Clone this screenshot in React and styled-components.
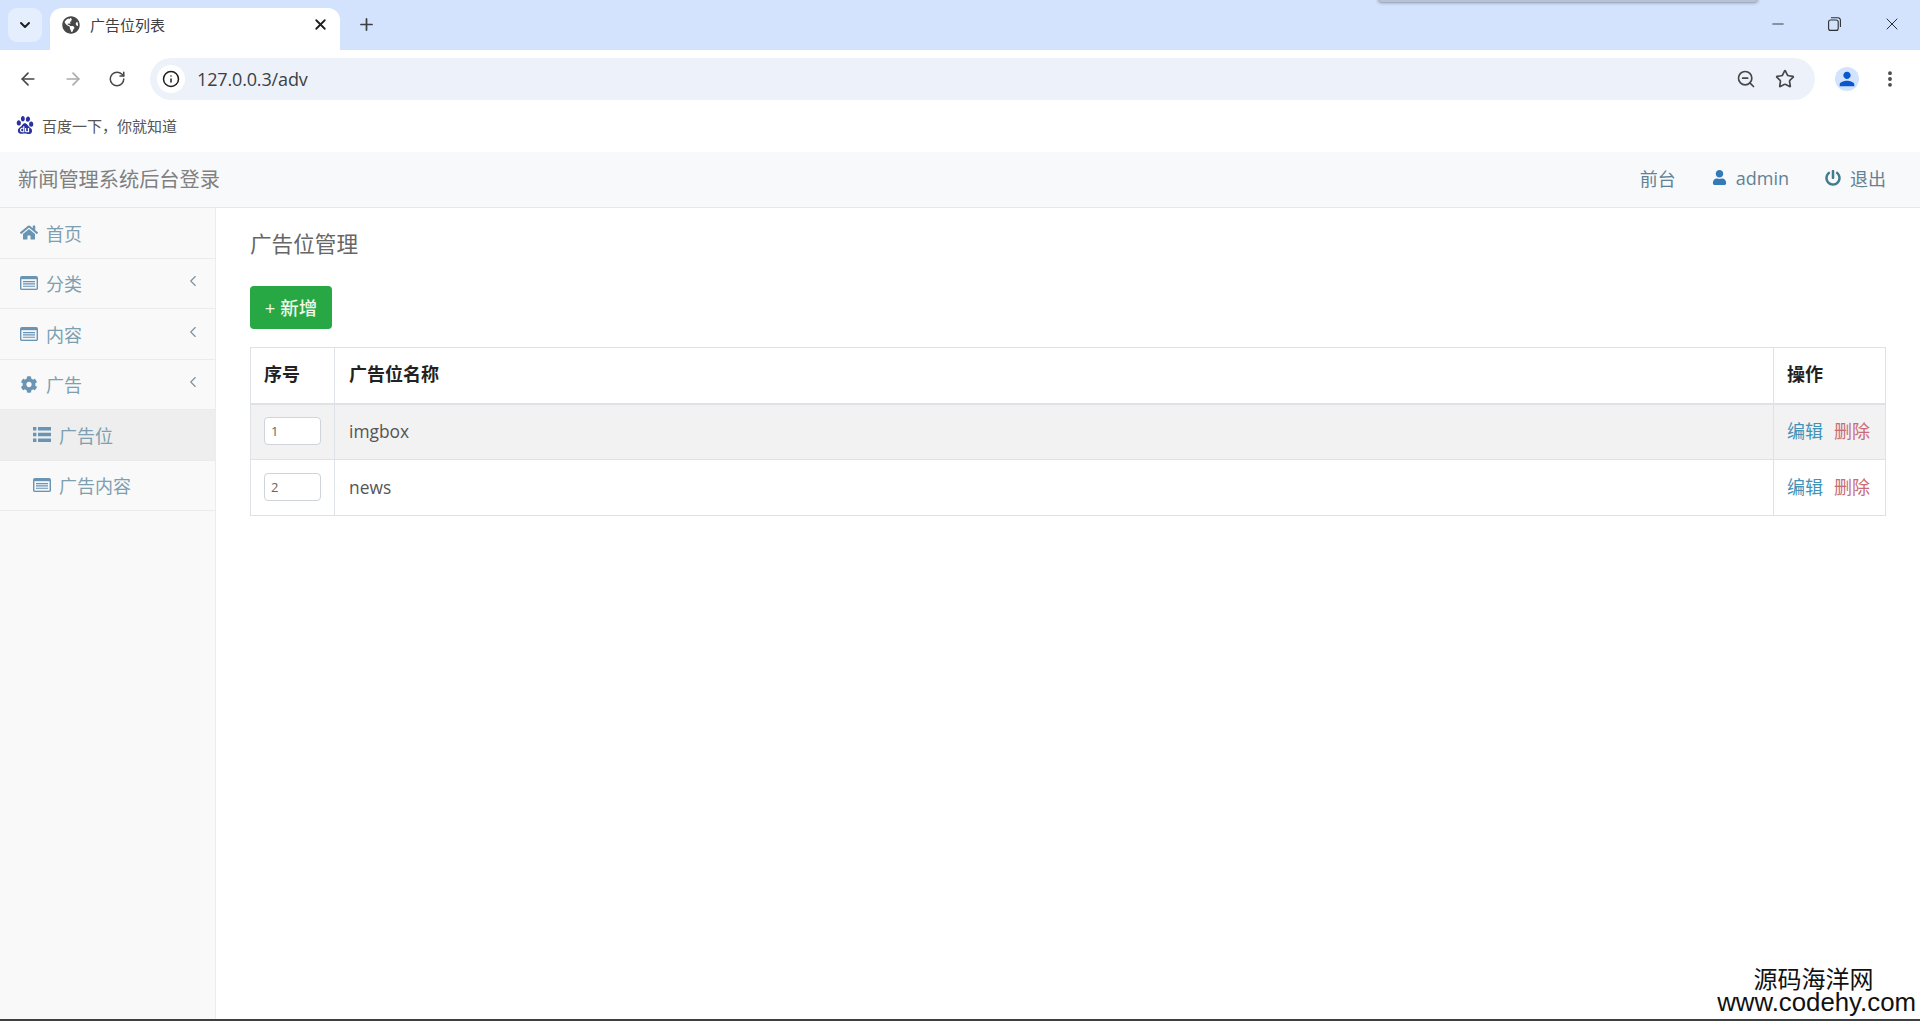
import React from 'react';
import styled, { createGlobalStyle } from 'styled-components';
import { ArrowLeft, ArrowRight, RotateCw, Info, Star, ZoomOut, EllipsisVertical, X, Plus, ChevronDown, Minus, ChevronLeft } from 'lucide-react';
import { FaHome, FaCog, FaUser, FaPowerOff, FaGlobeAmericas } from 'react-icons/fa';
import { MdPerson } from 'react-icons/md';
import { SiBaidu } from 'react-icons/si';

const cjk = `"Open Sans", "Noto Sans CJK SC", sans-serif`;

const GlobalStyle = createGlobalStyle`
  html, body { margin: 0; padding: 0; height: 100%; background: #fff; }
  * { box-sizing: border-box; }
  body { font-family: ${cjk}; overflow: hidden; }
`;

const Page = styled.div`
  position: relative;
  height: 1021px;
  display: flex;
  flex-direction: column;
  border-bottom: 2px solid #3c4043;
`;

const TabStrip = styled.div`
  position: relative;
  height: 50px;
  flex: none;
  background: #d3e3fd;
  display: flex;
  align-items: flex-end;
  padding-left: 8px;
`;

const TabSearch = styled.div`
  width: 34px;
  height: 34px;
  margin-bottom: 8px;
  border-radius: 9px;
  background: #e5eefc;
  color: #1f1f1f;
  display: flex;
  align-items: center;
  justify-content: center;
`;

const Tab = styled.div`
  width: 290px;
  height: 42px;
  margin-left: 8px;
  padding: 0 11px 9px 12px;
  background: #fff;
  border-radius: 12px 12px 0 0;
  display: flex;
  align-items: center;
  font-size: 15px;
  color: #3c4043;
`;

const TabTitle = styled.span`
  flex: 1;
  margin-left: 10px;
`;

const NewTab = styled.div`
  width: 52px;
  height: 42px;
  padding-bottom: 9px;
  display: flex;
  align-items: center;
  justify-content: center;
  color: #3c4043;
`;

const WindowControls = styled.div`
  margin-left: auto;
  height: 50px;
  display: flex;
  align-items: center;
  padding-bottom: 2px;
  padding-right: 18px;
  gap: 41px;
  color: #2b2f33;
`;

const ShadowPeek = styled.div`
  position: absolute;
  top: -6px;
  left: 1378px;
  width: 380px;
  height: 8px;
  background: #b7c3d2;
  border-radius: 6px;
  box-shadow: 0 1px 3px rgba(60, 70, 90, 0.5);
`;

const Toolbar = styled.div`
  height: 50px;
  flex: none;
  padding-top: 8px;
  display: flex;
  align-items: flex-start;
  background: #fff;
  color: #474747;
`;

const NavButtons = styled.div`
  width: 150px;
  height: 42px;
  padding-left: 18px;
  display: flex;
  align-items: center;
  gap: 25px;
`;

const NavButton = styled.span`
  display: flex;
  color: ${(p) => (p.$disabled ? '#a8abad' : '#474747')};
`;

const AddressBar = styled.div`
  width: 1665px;
  height: 42px;
  padding: 0 20px 0 7px;
  border-radius: 21px;
  background: #edf2fa;
  display: flex;
  align-items: center;
`;

const InfoChip = styled.span`
  width: 28px;
  height: 28px;
  border-radius: 50%;
  background: #fff;
  display: flex;
  align-items: center;
  justify-content: center;
  color: #1f1f1f;
`;

const Url = styled.span`
  margin-left: 12px;
  flex: 1;
  font-size: 18px;
  letter-spacing: -0.15px;
  color: #3c4043;
`;

const AddressIcons = styled.div`
  display: flex;
  align-items: center;
  gap: 19px;
`;

const Avatar = styled.span`
  width: 24px;
  height: 24px;
  margin-left: 20px;
  border-radius: 50%;
  background: #d3e3fd;
  color: #0b57d0;
  display: flex;
  align-items: center;
  justify-content: center;
  align-self: center;
`;

const Dots = styled.span`
  margin-left: 21px;
  display: flex;
  align-self: center;
  color: #474747;
`;

const BookmarkBar = styled.div`
  height: 52px;
  flex: none;
  padding: 0 0 2px 16px;
  display: flex;
  align-items: center;
  background: #fff;
`;

const BookmarkText = styled.span`
  margin-left: 8px;
  font-size: 15px;
  color: #555;
`;

const TopNav = styled.header`
  height: 56px;
  flex: none;
  padding: 0 34px 4px 18px;
  display: flex;
  align-items: center;
  background: #f8f9fa;
  border-bottom: 1px solid #e7e7e7;
`;

const Brand = styled.span`
  font-size: 20.2px;
  color: #808080;
  margin-right: auto;
  position: relative;
  top: 1px;
`;

const TopLink = styled.a`
  display: flex;
  align-items: center;
  margin-left: ${(p) => p.$gap}px;
  font-size: 18px;
  color: #5f8296;
  svg { color: ${(p) => p.$iconColor || '#337ab7'}; margin-right: 9px; }
`;

const Body = styled.div`
  flex: 1;
  display: flex;
  min-height: 0;
`;

const Sidebar = styled.nav`
  width: 216px;
  flex: none;
  background: #f9f9f9;
  border-right: 1px solid #ececec;
`;

const SideItem = styled.a`
  height: 50.5px;
  padding: 0 13px 0 ${(p) => (p.$sub ? 33 : 20)}px;
  display: flex;
  align-items: center;
  font-size: 18px;
  color: #7d9fb0;
  border-bottom: 1px solid #ebebeb;
  background: ${(p) => (p.$active ? '#eeeeee' : 'transparent')};
  .lead { color: #6a94b4; width: 18px; height: 17px; margin-right: 8px; flex: none; }
  .lead.alt { height: 14px; }
  .lead.bars { height: 15px; }
`;

const Caret = styled.span`
  margin-left: auto;
  display: flex;
  color: #7d8f9c;
  position: relative;
  top: -2px;
`;

const Main = styled.main`
  flex: 1;
  padding: 19px 34px 0 34px;
  background: #fff;
`;

const Title = styled.h1`
  margin: 0 0 26px;
  font-size: 21.6px;
  line-height: 33px;
  font-weight: 400;
  color: #666;
`;

const AddButton = styled.button`
  display: block;
  width: 82px;
  height: 43px;
  padding: 0 0 2px;
  margin-bottom: 18px;
  border: none;
  border-radius: 4px;
  background: #28a745;
  color: #eefbe9;
  font-family: ${cjk};
  font-size: 18.5px;
  font-weight: 500;
`;

const Table = styled.table`
  width: 1636px;
  border-collapse: collapse;
  table-layout: fixed;
  border: 1px solid #dee2e6;
`;

const Th = styled.th`
  width: ${(p) => (p.$w ? `${p.$w}px` : 'auto')};
  height: 56px;
  padding: 0 13px 4px;
  text-align: left;
  font-size: 18px;
  font-weight: 700;
  color: #222;
  border-left: 1px solid #dee2e6;
  border-bottom: 2px solid #dee2e6;
  &:nth-child(2) { padding-left: 14px; }
`;

const Row = styled.tr`
  background: ${(p) => (p.$shade ? '#f2f2f2' : '#fff')};
`;

const Td = styled.td`
  height: 56px;
  padding: 0 13px 2px;
  font-size: 17.4px;
  white-space: nowrap;
  color: #555;
  border-left: 1px solid #dee2e6;
  border-bottom: 1px solid #dee2e6;
  &:nth-child(2) { padding-left: 14px; }
`;

const SortInput = styled.input`
  display: block;
  width: 57px;
  height: 28px;
  padding: 0 6px;
  border: 1px solid #ced4da;
  border-radius: 4px;
  background: #fff;
  font-family: ${cjk};
  font-size: 13px;
  color: #666;
`;

const ActionLink = styled.a`
  position: relative;
  top: -1px;
  font-size: 18px;
  margin-right: 11px;
  color: ${(p) => (p.$danger ? '#c96a78' : '#3f93b8')};
`;

const Watermark = styled.div`
  position: absolute;
  right: 4px;
  bottom: 4px;
  text-align: center;
  color: #111;
  line-height: 1;
`;

const WatermarkCn = styled.div`
  margin-right: 6px;
  font-family: "Noto Sans CJK SC", sans-serif;
  font-size: 24px;
  line-height: 24px;
`;

const WatermarkEn = styled.div`
  font-family: "Liberation Sans", sans-serif;
  font-size: 25.8px;
  line-height: 25px;
`;

const RestoreIcon = () => (
  <svg width="13" height="14" viewBox="0 0 13 14" fill="none" stroke="currentColor" strokeWidth="1.1">
    <rect x="0.6" y="3" width="9.6" height="10.4" rx="2" />
    <path d="M3 0.8h7a2.4 2.4 0 0 1 2.4 2.4V10" />
  </svg>
);

// Font Awesome 4 list-alt: dark frame and header band, pale body with lines
const ListAltIcon = () => (
  <svg className="lead alt" viewBox="0 0 18 15" preserveAspectRatio="none">
    <rect x="0" y="0" width="18" height="15" rx="2" fill="currentColor" />
    <rect x="1.4" y="3.4" width="15.2" height="10.2" fill="#f4f7f9" />
    <path d="M3 6h12M3 8.5h12M3 11h12" stroke="currentColor" strokeWidth="1.2" />
  </svg>
);

// Font Awesome 4 list: square bullets with thick bars
const ListIcon = () => (
  <svg className="lead bars" viewBox="0 0 18 15" preserveAspectRatio="none" fill="currentColor">
    <path d="M0 0h3.4v3.4H0zM5 0h13v3.4H5zM0 5.8h3.4v3.4H0zM5 5.8h13v3.4H5zM0 11.6h3.4V15H0zM5 11.6h13V15H5z" />
  </svg>
);

const HomeIcon = () => <FaHome className="lead" />;
const CogIcon = () => <FaCog className="lead" />;

const sideItems = [
  { icon: HomeIcon, label: '首页' },
  { icon: ListAltIcon, label: '分类', caret: true },
  { icon: ListAltIcon, label: '内容', caret: true },
  { icon: CogIcon, label: '广告', caret: true },
  { icon: ListIcon, label: '广告位', sub: true, active: true },
  { icon: ListAltIcon, label: '广告内容', sub: true },
];

const rows = [
  { id: 1, name: 'imgbox' },
  { id: 2, name: 'news' },
];

export default function App() {
  return (
    <Page>
      <GlobalStyle />
      <TabStrip>
        <ShadowPeek />
        <TabSearch><ChevronDown size={16} strokeWidth={3} /></TabSearch>
        <Tab>
          <FaGlobeAmericas size={18} color="#474747" />
          <TabTitle>广告位列表</TabTitle>
          <X size={17} strokeWidth={2.6} color="#1f1f1f" />
        </Tab>
        <NewTab><Plus size={19} strokeWidth={2.2} /></NewTab>
        <WindowControls>
          <Minus size={18} strokeWidth={1.2} />
          <RestoreIcon />
          <X size={20} strokeWidth={1.2} />
        </WindowControls>
      </TabStrip>

      <Toolbar>
        <NavButtons>
          <NavButton><ArrowLeft size={20} /></NavButton>
          <NavButton $disabled><ArrowRight size={20} /></NavButton>
          <NavButton><RotateCw size={18} /></NavButton>
        </NavButtons>
        <AddressBar>
          <InfoChip><Info size={18} /></InfoChip>
          <Url>127.0.0.3/adv</Url>
          <AddressIcons>
            <ZoomOut size={20} />
            <Star size={20} />
          </AddressIcons>
        </AddressBar>
        <Avatar><MdPerson size={22} /></Avatar>
        <Dots><EllipsisVertical size={20} strokeWidth={2.6} /></Dots>
      </Toolbar>

      <BookmarkBar>
        <SiBaidu size={18} color="#2932a0" />
        <BookmarkText>百度一下，你就知道</BookmarkText>
      </BookmarkBar>

      <TopNav>
        <Brand>新闻管理系统后台登录</Brand>
        <TopLink $gap={0}>前台</TopLink>
        <TopLink $gap={36}><FaUser size={15} />admin</TopLink>
        <TopLink $gap={36} $iconColor="#3f7c8c"><FaPowerOff size={16} />退出</TopLink>
      </TopNav>

      <Body>
        <Sidebar>
          {sideItems.map((item) => (
            <SideItem key={item.label} $sub={item.sub} $active={item.active}>
              <item.icon />
              {item.label}
              {item.caret && <Caret><ChevronLeft size={18} strokeWidth={1.5} /></Caret>}
            </SideItem>
          ))}
        </Sidebar>
        <Main>
          <Title>广告位管理</Title>
          <AddButton>+ 新增</AddButton>
          <Table>
            <thead>
              <tr>
                <Th $w={84}>序号</Th>
                <Th>广告位名称</Th>
                <Th $w={112}>操作</Th>
              </tr>
            </thead>
            <tbody>
              {rows.map((row, i) => (
                <Row key={row.id} $shade={i === 0}>
                  <Td><SortInput defaultValue={row.id} /></Td>
                  <Td>{row.name}</Td>
                  <Td>
                    <ActionLink>编辑</ActionLink>
                    <ActionLink $danger>删除</ActionLink>
                  </Td>
                </Row>
              ))}
            </tbody>
          </Table>
        </Main>
      </Body>

      <Watermark>
        <WatermarkCn>源码海洋网</WatermarkCn>
        <WatermarkEn>www.codehy.com</WatermarkEn>
      </Watermark>
    </Page>
  );
}
